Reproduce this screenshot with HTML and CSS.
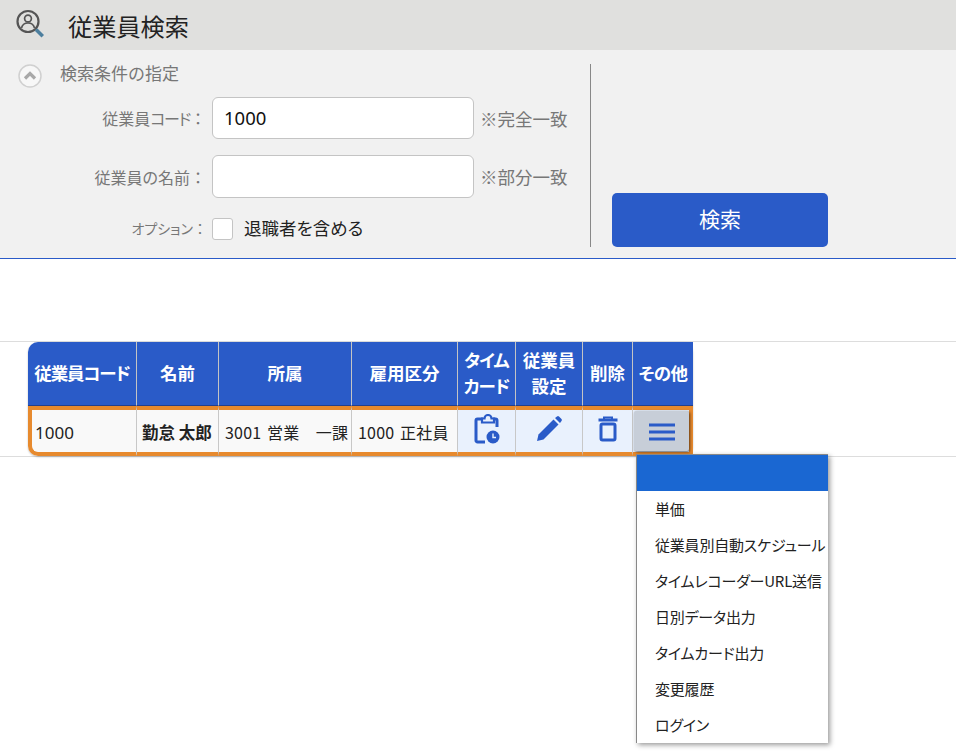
FILE: index.html
```html
<!DOCTYPE html>
<html lang="ja">
<head>
<meta charset="utf-8">
<title>従業員検索</title>
<link rel="stylesheet" href="styles.css">
</head>
<body>
<header class="page-head">
  <svg class="head-icon" viewBox="0 0 30 30" width="30" height="30" aria-hidden="true">
    <circle cx="13" cy="12.5" r="10.5" fill="none" stroke="#555" stroke-width="2.200"/>
    <circle cx="13" cy="9.500" r="3.400" fill="none" stroke="#555" stroke-width="1.700"/>
    <path d="M6.500 19c.8-3.600 3.400-5 6.500-5s5.700 1.400 6.500 5" fill="none" stroke="#555" stroke-width="1.700"/>
    <path d="M20.500 20.500l2-1 6.500 6.500-2.500 2.500-6.500-6.500z" fill="#4d7f9e"/>
  </svg>
  <h1 class="page-title">従業員検索</h1>
</header>
<section class="search-panel">
  <div class="search-left">
    <div class="cond-head">
      <span class="toggle"><svg viewBox="0 0 24 24" width="24" height="24" aria-hidden="true"><circle cx="12" cy="12" r="11" fill="#f7f7f7" stroke="#d0d0d0" stroke-width="1.500"/><path d="M7 14.500l5-5 5 5" fill="none" stroke="#a8a8a8" stroke-width="3.200"/></svg></span>
      <span class="cond-title">検索条件の指定</span>
    </div>
    <div class="form-row row-code">
      <label class="field-label">従業員<span class="tight">コード</span><span class="colon">：</span></label>
      <input class="text-input" type="text" value="1000">
      <span class="hint">※完全一致</span>
    </div>
    <div class="form-row row-name">
      <label class="field-label">従業員の名前<span class="colon">：</span></label>
      <input class="text-input" type="text">
      <span class="hint">※部分一致</span>
    </div>
    <div class="form-row row-option">
      <label class="field-label small">オプション<span class="colon">：</span></label>
      <span class="checkbox"></span>
      <span class="check-label">退職者を含める</span>
    </div>
  </div>
  <div class="search-right">
    <button class="search-btn" type="button">検索</button>
  </div>
</section>
<main class="result">
  <div class="table-band">
    <table class="result-table">
      <colgroup>
        <col class="c1"><col class="c2"><col class="c3"><col class="c4"><col class="c5"><col class="c6"><col class="c7"><col class="c8">
      </colgroup>
      <thead>
        <tr>
          <th>従業員コード</th><th>名前</th><th>所属</th><th>雇用区分</th><th>タイム<br>カード</th><th>従業員<br>設定</th><th>削除</th><th>その他</th>
        </tr>
      </thead>
      <tbody>
        <tr>
          <td class="first">1000</td>
          <td class="name">勤怠 太郎</td>
          <td class="plain">3001 営業　一課</td>
          <td class="plain">1000 正社員</td>
          <td class="action">
            <svg viewBox="0 0 26 30" width="26" height="30" aria-hidden="true">
              <path d="M9 5H3.500A1.500 1.500 0 0 0 2 6.500v20A1.500 1.500 0 0 0 3.500 28H11M19 5h2.500A1.500 1.500 0 0 1 23 6.500V13" fill="none" stroke="#2a5bc8" stroke-width="3"/>
              <path d="M8 4.500h2.500a3.500 3.500 0 0 1 7 0H20v4H8z" fill="none" stroke="#2a5bc8" stroke-width="2.200"/>
              <circle cx="19" cy="23" r="6.500" fill="#2a5bc8"/>
              <path d="M19 19.500V23.500h3" fill="none" stroke="#e8f1fd" stroke-width="1.400"/>
            </svg>
          </td>
          <td class="action">
            <svg viewBox="0 0 28 28" width="28" height="28" aria-hidden="true">
              <path d="M2 26l1.500-6.500L18.500 4.500l5 5L8.500 24.500z" fill="#2a5bc8"/>
              <path d="M20 3l2-1.500a1.500 1.500 0 0 1 2 0l2.500 2.500a1.500 1.500 0 0 1 0 2L25 8z" fill="#2a5bc8"/>
            </svg>
          </td>
          <td class="action">
            <svg viewBox="0 0 22 26" width="22" height="26" aria-hidden="true">
              <path d="M1.500 4h19" stroke="#2a5bc8" stroke-width="3" fill="none"/>
              <path d="M7 3.500V1.500h8v2" fill="none" stroke="#2a5bc8" stroke-width="2"/>
              <rect x="4" y="8" width="14" height="16" rx="1.500" fill="none" stroke="#2a5bc8" stroke-width="3"/>
            </svg>
          </td>
          <td class="action more">
            <span class="more-btn">
              <svg viewBox="0 0 26 20" width="26" height="20" aria-hidden="true">
                <path d="M0 3h26M0 10h26M0 17h26" stroke="#2a5bc8" stroke-width="2.800" fill="none"/>
              </svg>
            </span>
          </td>
        </tr>
      </tbody>
    </table>
  </div>
  <nav class="popup-menu">
    <div class="menu-top"></div>
    <a class="menu-item">単価</a>
    <a class="menu-item">従業員別自動スケジュール</a>
    <a class="menu-item">タイムレコーダーURL送信</a>
    <a class="menu-item">日別データ出力</a>
    <a class="menu-item">タイムカード出力</a>
    <a class="menu-item">変更履歴</a>
    <a class="menu-item">ログイン</a>
  </nav>
</main>
</body>
</html>
```
FILE: styles.css
```css
* { box-sizing: border-box; }
html, body { margin: 0; padding: 0; }
body {
  width: 956px;
  height: 755px;
  overflow: hidden;
  background: #fff;
  color: #222;
  font-family: "Noto Sans CJK JP", "Noto Sans", sans-serif;
}
.page-head {
  height: 50px;
  background: #e0e0de;
  display: flex;
  align-items: center;
  padding-left: 15px;
}
.head-icon { margin-top: -2px; }
.page-title {
  margin: 2px 0 0 23px;
  font-size: 24.200px;
  font-weight: 400;
  line-height: 50px;
  color: #222;
}
.search-panel {
  height: 209px;
  background: #f1f1f1;
  border-bottom: 1px solid #2a5bc8;
  display: flex;
  padding-top: 14px;
}
.search-left {
  width: 591px;
  height: 183px;
  border-right: 1px solid #888;
  padding-left: 18px;
}
.cond-head {
  display: flex;
  align-items: center;
  height: 24px;
}
.toggle { display: flex; width: 24px; height: 24px; }
.cond-title {
  margin-left: 18px;
  margin-top: -7px;
  font-size: 17px;
  color: #777;
  line-height: 20px;
}
.form-row {
  display: flex;
  align-items: center;
  margin-left: -18px;
}
.row-code { margin-top: 9px; height: 42px; }
.row-name { margin-top: 16px; height: 43px; }
.row-option { margin-top: 19px; height: 24px; }
.field-label {
  width: 212px;
  padding-right: 6px;
  text-align: right;
  font-size: 16px;
  color: #777;
  flex: none;
  font-feature-settings: "palt";
}
.field-label.small { font-size: 14px; padding: 0 5px 2px 0; }
.tight { letter-spacing: -1.300px; }
.colon { font-feature-settings: normal; }
.text-input {
  width: 262px;
  height: 100%;
  flex: none;
  border: 1px solid #c4c4c4;
  border-radius: 6px;
  background: #fff;
  padding: 0 11px 2px;
  font-family: "Noto Sans", sans-serif;
  font-size: 18.500px;
  color: #111;
}
.hint {
  margin-left: 6px;
  font-size: 17.500px;
  color: #777;
  white-space: nowrap;
}
.checkbox {
  width: 21px;
  height: 22px;
  background: #fff;
  border: 1px solid #c4c4c4;
  border-radius: 3px;
  flex: none;
}
.check-label {
  margin-left: 11px;
  padding-bottom: 2px;
  font-size: 17.500px;
  color: #222;
  font-feature-settings: "palt";
  line-height: 24px;
}
.search-right {
  padding: 129px 0 0 21px;
}
.search-btn {
  display: block;
  width: 216px;
  height: 54px;
  border: 0;
  border-radius: 5px;
  background: #2a5bc8;
  color: #fff;
  font-family: inherit;
  font-size: 21px;
  padding: 0 0 5px;
}
.result {
  position: relative;
  padding-top: 82px;
}
.table-band {
  border-top: 1px solid #ddd;
  border-bottom: 1px solid #ddd;
  padding-left: 28px;
  height: 116px;
}
.result-table {
  border-collapse: separate;
  border-spacing: 0;
  table-layout: fixed;
  width: 665px;
  height: 114px;
  box-shadow: 0 1px 2px rgba(0,0,0,.25);
  border-radius: 10px;
}
.c1 { width: 109px; }
.c2 { width: 82px; }
.c3 { width: 133px; }
.c4 { width: 106px; }
.c5 { width: 58px; }
.c6 { width: 67px; }
.c7 { width: 50px; }
.c8 { width: 60px; }
.result-table th {
  height: 64px;
  background: #2a5bc8;
  color: #fff;
  font-size: 17.500px;
  font-weight: 700;
  line-height: 26px;
  padding: 0 0 2px;
  border-right: 1px solid #c4c4c4;
  border-bottom: 1px solid #24408c;
  white-space: nowrap;
  font-feature-settings: "palt";
}
.result-table th:first-child { border-top-left-radius: 10px; letter-spacing: -1.100px; }
.result-table th:nth-child(5) { letter-spacing: -1px; }
.result-table th:last-child { border-right: 0; letter-spacing: -.5px; }
.result-table td {
  height: 50px;
  background: #f9f9f9;
  border-top: 4px solid #e78a2e;
  border-bottom: 4px solid #e78a2e;
  border-right: 1px solid #c8c8c8;
  font-size: 16px;
  padding: 2px 0 0 6px;
  white-space: nowrap;
  color: #222;
}
.result-table td.plain { letter-spacing: .2px; word-spacing: 2px; }
.result-table td.first {
  border-left: 4px solid #e78a2e;
  border-bottom-left-radius: 10px;
  padding-left: 3px;
  font-family: "Noto Sans", sans-serif;
  font-size: 17px;
}
.result-table td.name { font-weight: 700; padding-left: 5px; font-size: 16.500px; }
.result-table td.action {
  background: #e9f1fd;
  padding: 0 0 4px;
  text-align: center;
}
.result-table td.action svg { display: block; margin: 0 auto; }
.result-table td.more {
  border-right: 4px solid #e78a2e;
  border-bottom-right-radius: 4px;
  padding: 0 0 0 1px;
}
.more-btn {
  display: flex;
  align-items: center;
  justify-content: center;
  height: 40px;
  width: 55px;
  padding-top: 2px;
  background: #c7ced8;
  border-radius: 2px;
  box-shadow: 1px 1px 3px rgba(0,0,0,.6);
}
.popup-menu {
  position: absolute;
  left: 636px;
  top: 195px;
  width: 192px;
  height: 289px;
  background: #fff;
  border-left: 1px solid #888;
  border-top: 1px solid #888;
  box-shadow: 2px 2px 5px rgba(0,0,0,.4);
}
.menu-top {
  height: 36px;
  background: #1a67d2;
}
.menu-item {
  display: block;
  height: 36px;
  line-height: 36px;
  padding-left: 18px;
  font-size: 15px;
  letter-spacing: -.2px;
  color: #222;
  white-space: nowrap;
  font-feature-settings: "palt";
}
```
